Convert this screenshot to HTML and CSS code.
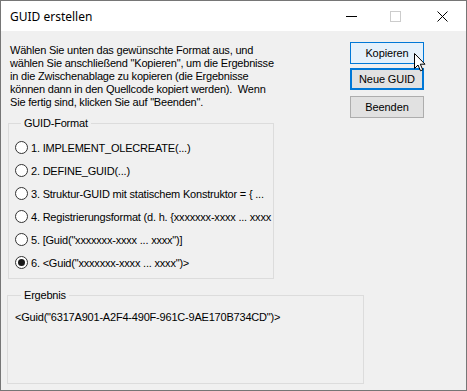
FILE: index.html
```html
<!DOCTYPE html>
<html lang="de">
<head>
    <meta charset="UTF-8">
    <title>GUID erstellen</title>
    <link rel="stylesheet" href="styles.css">
</head>
<body>
    <div class="window">
        <div class="titlebar">
            <span class="title">GUID erstellen</span>
            <div class="controls">
                <span class="ctl ctl-min"><svg width="11" height="11" viewBox="0 0 11 11"><path d="M0 5.5h11" stroke="#000" stroke-width="1"/></svg></span>
                <span class="ctl ctl-max"><svg width="11" height="11" viewBox="0 0 11 11"><rect x="0.5" y="0.5" width="10" height="10" fill="none" stroke="#cccccc"/></svg></span>
                <span class="ctl ctl-close"><svg width="11" height="11" viewBox="0 0 11 11"><path d="M0.5 0.5l10 10M10.5 0.5l-10 10" stroke="#000" stroke-width="1"/></svg></span>
            </div>
        </div>

        <div class="body">
            <div class="top">
                <div class="left">
                    <p class="intro">
                        Wählen Sie unten das gewünschte Format aus, und<br>
                        wählen Sie anschließend "Kopieren", um die Ergebnisse<br>
                        in die Zwischenablage zu kopieren (die Ergebnisse<br>
                        können dann in den Quellcode kopiert werden).&nbsp; Wenn<br>
                        Sie fertig sind, klicken Sie auf "Beenden".
                    </p>
                    <fieldset class="group format">
                        <legend>GUID-Format</legend>
                        <label class="option"><span class="radio"></span>1. IMPLEMENT_OLECREATE(...)</label>
                        <label class="option"><span class="radio"></span>2. DEFINE_GUID(...)</label>
                        <label class="option"><span class="radio"></span>3. Struktur-GUID mit statischem Konstruktor = { ...</label>
                        <label class="option"><span class="radio"></span>4. Registrierungsformat (d. h. {xxxxxxx-xxxx ... xxxx</label>
                        <label class="option"><span class="radio"></span>5. [Guid("xxxxxxx-xxxx ... xxxx")]</label>
                        <label class="option"><span class="radio checked"></span>6. &lt;Guid("xxxxxxx-xxxx ... xxxx")&gt;</label>
                    </fieldset>
                </div>
                <div class="buttons">
                    <button class="btn hover">Kopieren</button>
                    <button class="btn default">Neue GUID</button>
                    <button class="btn">Beenden</button>
                </div>
            </div>

            <fieldset class="group result">
                <legend>Ergebnis</legend>
                <div class="result-text">&lt;Guid("6317A901-A2F4-490F-961C-9AE170B734CD")&gt;</div>
            </fieldset>
        </div>

        <!-- mouse pointer over the Kopieren button -->
        <svg class="cursor" width="12" height="19" viewBox="0 0 12 19">
            <path d="M0.5 0.5 L0.5 15.5 L4 12 L6.5 17.8 L8.8 16.8 L6.3 11.2 L11 11.2 Z" fill="#fff" stroke="#000" stroke-width="1" stroke-linejoin="miter"/>
        </svg>
    </div>
</body>
</html>
```

FILE: styles.css
```css
body {
    margin: 0;
    background-color: #ffffff;
}

.window {
    position: relative;
    width: 467px;
    height: 391px;
    box-sizing: border-box;
    border: 1px solid #767676;
    background-color: #f0f0f0;
    font-family: "Liberation Sans", Arial, sans-serif;
    font-size: 11px;
    letter-spacing: -0.2px;
    color: #000;
    overflow: hidden;
}

.titlebar {
    height: 30px;
    background-color: #ffffff;
    display: flex;
    align-items: center;
    letter-spacing: 0;
}

.title {
    margin-left: 9px;
    font-family: "Noto Sans", "Open Sans", sans-serif;
    font-size: 12px;
    margin-top: 1px;
}

.controls {
    margin-left: auto;
    display: flex;
    height: 30px;
}

.ctl {
    width: 46px;
    display: flex;
    align-items: center;
    justify-content: center;
}

.ctl svg {
    display: block;
}

.ctl-min {
    margin-right: -2px;
}

.ctl-close {
    margin-right: 1px;
    margin-left: 1px;
}

.top {
    display: flex;
    align-items: flex-start;
}

.left {
    padding-left: 7px;
}

.intro {
    margin: 13px 0 0 2px;
    line-height: 13px;
    white-space: nowrap;
}

.group {
    margin: 0;
    border: 1px solid #dcdcdc;
    box-sizing: border-box;
}

.group legend {
    padding: 0 3px;
    margin-left: 6px;
    line-height: 13px;
}

.format {
    margin-top: 8px;
    width: 266px;
    height: 162px;
    padding: 6px 0 0 6px;
}

.option {
    display: flex;
    align-items: center;
    height: 23px;
    white-space: nowrap;
    overflow: hidden;
}

.radio {
    width: 11px;
    height: 11px;
    border: 1px solid #333333;
    border-radius: 50%;
    background-color: #ffffff;
    margin-right: 3px;
    display: flex;
    align-items: center;
    justify-content: center;
    flex-shrink: 0;
}

.radio.checked::after {
    content: "";
    width: 7px;
    height: 7px;
    border-radius: 50%;
    background-color: #1a1a1a;
}

.buttons {
    margin-left: auto;
    margin-right: 42px;
    padding-top: 11px;
    display: flex;
    flex-direction: column;
}

.btn {
    width: 74px;
    height: 22px;
    padding: 0;
    margin-bottom: 4px;
    font-family: "Liberation Sans", Arial, sans-serif;
    font-size: 11px;
    letter-spacing: -0.1px;
    color: #000;
    background-color: #e1e1e1;
    border: 1px solid #adadad;
    box-sizing: border-box;
}

.btn.hover {
    background-color: #e5f1fb;
    border-color: #0078d7;
}

.btn.default {
    border: 2px solid #0078d7;
    margin-bottom: 6px;
}

.result {
    margin: 10px 0 0 6px;
    width: 357px;
    height: 95px;
    padding: 9px 0 0 7px;
}

.result-text {
    line-height: 13px;
}

.cursor {
    position: absolute;
    left: 413px;
    top: 52px;
}
```
